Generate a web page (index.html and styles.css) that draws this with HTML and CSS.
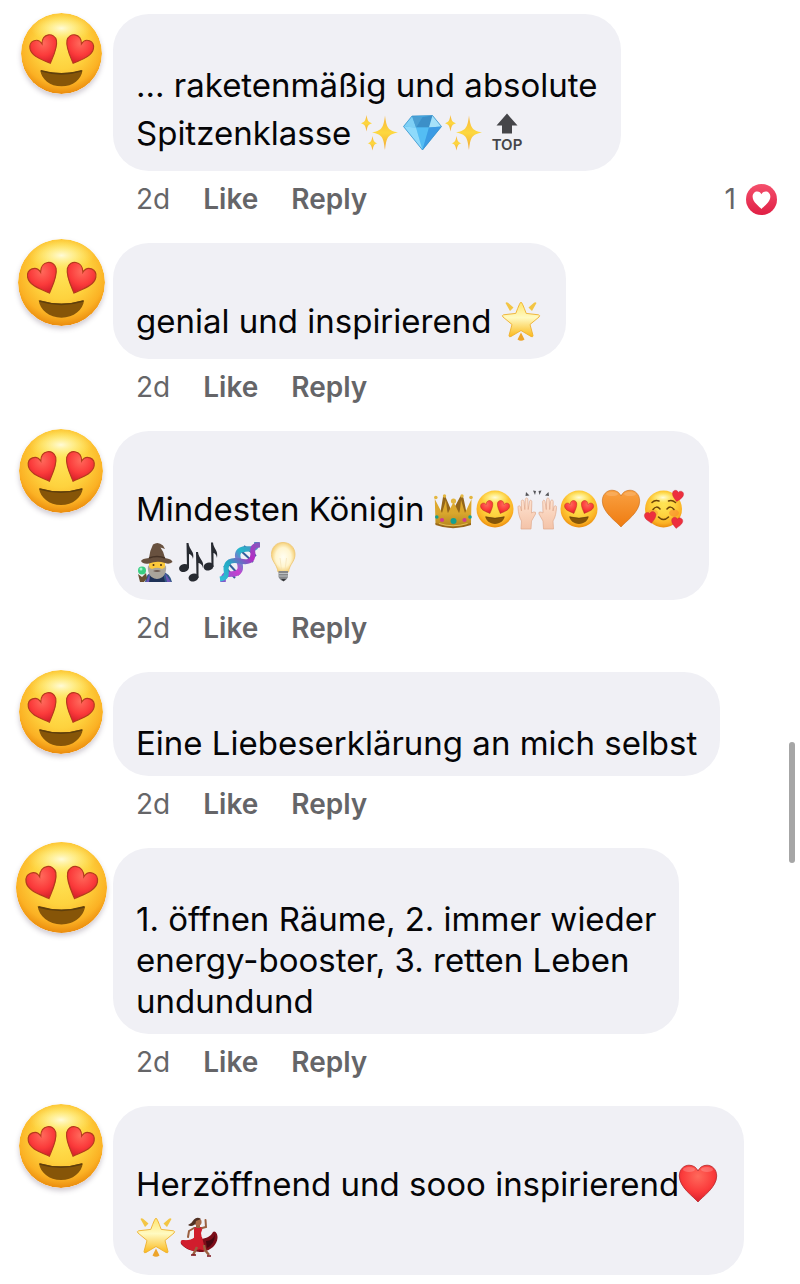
FILE: index.html
```html
<!DOCTYPE html>
<html lang="de">
<head>
<meta charset="utf-8">
<meta name="viewport" content="width=device-width, initial-scale=1">
<title>Kommentare</title>
<link rel="stylesheet" href="styles.css">
</head>
<body>
<svg class="defs" aria-hidden="true">
  <defs>
    <radialGradient id="gFace" cx=".5" cy=".38" r=".62">
      <stop offset="0" stop-color="#ffe556"/><stop offset=".5" stop-color="#fed23e"/><stop offset=".82" stop-color="#fbb124"/><stop offset="1" stop-color="#ea8b0d"/>
    </radialGradient>
    <radialGradient id="gShine"><stop offset="0" stop-color="#fffbd8"/><stop offset=".4" stop-color="#fff4a0" stop-opacity=".75"/><stop offset="1" stop-color="#ffec70" stop-opacity="0"/></radialGradient>
    <radialGradient id="gRed" cx=".5" cy=".3" r=".7"><stop offset="0" stop-color="#ff6a5c"/><stop offset=".6" stop-color="#fb3b3b"/><stop offset="1" stop-color="#d81f2b"/></radialGradient>
    <linearGradient id="gOrange" x2="0" y2="1"><stop offset="0" stop-color="#f9a142"/><stop offset="1" stop-color="#ef7b10"/></linearGradient>
    <linearGradient id="gStar" x2="0" y2="1"><stop offset="0" stop-color="#ffe56b"/><stop offset=".45" stop-color="#fffac2"/><stop offset="1" stop-color="#fbb91b"/></linearGradient>
    <linearGradient id="gSpark" x2="0" y2="1"><stop offset="0" stop-color="#f8b53e"/><stop offset=".5" stop-color="#fdd83f"/><stop offset="1" stop-color="#f2a636"/></linearGradient>
    <linearGradient id="gCrown" x2="0" y2="1"><stop offset="0" stop-color="#e0a92c"/><stop offset=".5" stop-color="#d9a72d"/><stop offset="1" stop-color="#b3821d"/></linearGradient>
    <linearGradient id="gSkin" x2="0" y2="1"><stop offset="0" stop-color="#ffe4d2"/><stop offset="1" stop-color="#f4c3a8"/></linearGradient>
    <radialGradient id="gBulb"><stop offset="0" stop-color="#fffef2"/><stop offset=".65" stop-color="#fff5cf"/><stop offset="1" stop-color="#f6d27c"/></radialGradient>
    <linearGradient id="gReact" x2="0" y2="1"><stop offset="0" stop-color="#f4506c"/><stop offset="1" stop-color="#e01f45"/></linearGradient>
    <linearGradient id="gDnaA" x1="1" y1="0" x2="0" y2="1"><stop offset="0" stop-color="#5d7fc0"/><stop offset=".35" stop-color="#21b9cb"/><stop offset=".65" stop-color="#c93fd0"/><stop offset="1" stop-color="#7c5ccc"/></linearGradient>
    <linearGradient id="gDnaB" x1="1" y1="0" x2="0" y2="1"><stop offset="0" stop-color="#8758bd"/><stop offset=".3" stop-color="#b62bc4"/><stop offset=".65" stop-color="#23a9c4"/><stop offset="1" stop-color="#33bed5"/></linearGradient>

    <path id="eye" d="M15.900 25.500C13 24 7.300 22.600 6.600 18.800C6 15.200 10.200 13.600 12.100 16.600C12.100 11.600 17.800 11.200 18.700 15C19.300 18.300 17.200 22.300 15.900 25.500Z" fill="url(#gRed)" stroke="#b43a1c" stroke-width=".5"/>
    <g id="love">
      <circle cx="21" cy="21" r="18.500" fill="url(#gFace)"/>
      <ellipse cx="21" cy="9.500" rx="14" ry="6.800" fill="url(#gShine)"/>
      <use href="#eye"/><use href="#eye" transform="translate(42.200 0) scale(-1 1)"/>
      <path d="M11.300 28.600Q21 31.400 30.600 28.600C30.200 32.600 26.200 36 21 36S11.800 32.600 11.300 28.600Z" fill="#865508"/>
      <path d="M11.600 28.900Q21 31.700 30.300 28.900" fill="none" stroke="#5f3f0c" stroke-width=".7"/>
    </g>
    <path id="heart" d="M21 39C17 34 2.300 24.500 2.300 13C2.300 6.500 6.800 2.200 12 2.200C16.500 2.200 19.500 4.600 21 8C22.500 4.600 25.500 2.200 30 2.200C35.200 2.200 39.700 6.500 39.700 13C39.700 24.500 25 34 21 39Z"/>
    <g id="redheart">
      <use href="#heart" fill="url(#gRed)" stroke="#b5272a" stroke-width=".8"/>
      <ellipse cx="12" cy="6.500" rx="6" ry="2.500" fill="#fff" opacity=".2"/><ellipse cx="30" cy="6.500" rx="6" ry="2.500" fill="#fff" opacity=".2"/>
    </g>
    <g id="orangeheart">
      <use href="#heart" fill="url(#gOrange)" stroke="#c86b17" stroke-width=".6"/>
      <ellipse cx="12" cy="6" rx="6" ry="2" fill="#fff" opacity=".15"/><ellipse cx="30" cy="6" rx="6" ry="2" fill="#fff" opacity=".15"/>
    </g>
    <g id="adore">
      <circle cx="21.500" cy="21" r="18.500" fill="url(#gFace)"/>
      <ellipse cx="21" cy="9.500" rx="13" ry="6" fill="url(#gShine)"/>
      <ellipse cx="11" cy="25" rx="5" ry="3.500" fill="#f88a2d" opacity=".45"/><ellipse cx="32" cy="25" rx="5" ry="3.500" fill="#f88a2d" opacity=".6"/>
      <g fill="none" stroke="#6d4308" stroke-width="1.500" stroke-linecap="round">
        <path d="M10 14.500Q13 11.500 17 13M26.500 13Q30 11.500 33.500 14.500M11 21.500Q14.500 17 18 21M25 21Q28.500 17 32 21.500M16.500 29Q21.500 34 26.500 29"/>
      </g>
      <use href="#heart" transform="translate(30.500 1) rotate(10) scale(.3)" fill="#ed2f3e" stroke="#b62333"/>
      <use href="#heart" transform="translate(1 24.500) rotate(-10) scale(.31)" fill="#ed2f3e" stroke="#b62333"/>
      <use href="#heart" transform="translate(29.500 28) rotate(8) scale(.3)" fill="#ed2f3e" stroke="#b62333"/>
    </g>
    <g id="star">
      <path d="M22 2Q23 2 27.200 13.400L39.500 14.800Q41.500 15.500 40 17L31 24.500L34 35.500Q34 37.500 32 36.500L22 30.500L12 36.500Q10 37.500 10 35.500L13 24.500L4 17Q2.500 15.500 4.500 14.800L16.800 13.400Q21 2 22 2Z" fill="url(#gStar)" stroke="#eeb02c" stroke-width=".9"/>
      <path d="M6.500 3Q7.500 1.800 9 2.800L14.500 7.500L11 11ZM37.500 3Q36.500 1.800 35 2.800L29.500 7.500L33 11Z" fill="#f3c544"/>
      <path d="M22 32.500L25.500 39.500Q22 42 18.500 39.500Z" fill="#eda42b"/>
    </g>
    <g id="sparkles" fill="url(#gSpark)">
      <path d="M26 3.500C27.500 15.500 29 18.500 39 20.500C29 22.300 27.500 25 26 38C24.500 25 23 22.300 13 20.500C23 18.500 24.500 15.500 26 3.500Z"/>
      <path d="M7.500 3C8.500 8.800 9.500 10.300 13 11.200C9.500 12.200 8.500 13.500 7.500 19.500C6.500 13.500 5.500 12.200 2 11.200C5.500 10.300 6.500 8.800 7.500 3Z"/>
      <path d="M13.500 24C14.500 29.300 15.300 30.500 18.500 31.300C15.300 32.200 14.500 33.500 13.500 38.500C12.500 33.500 11.700 32.200 8.500 31.300C11.700 30.500 12.500 29.300 13.500 24Z"/>
    </g>
    <g id="gem">
      <path d="M11 4L31.500 3.500L40.500 14.500L21.500 38L2.500 14.500Z" fill="#46aee8"/>
      <path d="M11 4L15 15.500L2.500 14.500Z" fill="#7fd0f5"/><path d="M11 4L21.500 5L15 15.500Z" fill="#4c9fd2"/><path d="M31.500 3.500L21.500 5L15 15.500L28 15.500Z" fill="#3c8fc8"/>
      <path d="M31.500 3.500L28 15.500L40.500 14.500Z" fill="#a5e2fa"/><path d="M15 15.500H28L21.500 38Z" fill="#54bdf4"/><path d="M2.500 14.500L15 15.500L21.500 38Z" fill="#8edafb"/><path d="M28 15.500L40.500 14.500L21.500 38Z" fill="#3b9be4"/>
      <path d="M11 4L31.500 3.500L40.500 14.500L21.500 38L2.500 14.500Z" fill="none" stroke="#358fc9" stroke-width=".7"/>
    </g>
    <g id="top" fill="#454549">
      <path d="M22 1.500L32.500 13.500H27V21.500H17V13.500H11.500Z"/>
      <text x="22" y="38" text-anchor="middle" class="top-label">TOP</text>
    </g>
    <g id="crown">
      <path d="M8 27L11 9Q13 6 14 10L20 24L28 9Q30 6 31.500 10L35 27Z" fill="#94661a"/>
      <path d="M2.800 11L10 25L14 12Q15 24 16 25L21.500 14L27 25Q28 24 29 12L33 25L39.500 11L39 36Q21 43 3.500 36Z" fill="url(#gCrown)"/>
      <path d="M3.500 35Q21 42 39 35V37Q21 43.500 3.500 37Z" fill="#98671a"/>
      <g fill="#e3b640"><circle cx="3.800" cy="9.500" r="1.800"/><circle cx="12.500" cy="8" r="1.700"/><circle cx="30" cy="8" r="1.700"/><circle cx="39" cy="9.500" r="1.800"/><circle cx="21.500" cy="13" r="2.600"/></g>
      <circle cx="21.500" cy="33" r="3" fill="#159f90"/><circle cx="10" cy="32" r="2.100" fill="#d13c8c"/><circle cx="32.500" cy="32" r="2.100" fill="#d13c8c"/><circle cx="4.800" cy="29" r="1.800" fill="#159f90"/><circle cx="38" cy="29" r="1.800" fill="#159f90"/>
      <path d="M7 35.500Q21 40 35.500 35.500" fill="none" stroke="#e8c25a" stroke-width=".9"/>
    </g>
    <path id="hand" d="M5 41L5.500 33C3 29 2.500 25 2 19.500C1.800 17.500 4 17 4.500 19L5.500 23L5.300 13.500C5.300 11.500 7.700 11.500 8 13.500L8.800 21.500L9.300 11.500C9.500 9.500 11.700 9.500 11.800 11.500L12.200 21.500L13.500 13.500C13.800 11.500 16 12 15.800 14L15.500 25L17.500 24Q20.500 23.500 19.500 26L15.500 33L15 41Z" fill="url(#gSkin)" stroke="#dfa98c" stroke-width=".7"/>
    <g id="hands">
      <use href="#hand"/><use href="#hand" transform="translate(42.500 0) scale(-1 1)"/>
      <path d="M10 4L13.500 7.500L9.500 8ZM17 2.500L20 3L19 7ZM25.500 2.500L22.500 3L23.500 7ZM32.500 4L29 7.500L33 8Z" fill="#555559"/>
    </g>
    <g id="mage">
      <path d="M11 41Q12 32 20 30H27Q36 32 38 41Z" fill="#315985"/><path d="M15 41L17 32L23 36L29 32L31 41Z" fill="#1e3156"/>
      <path d="M31 32L37 41H33ZM16 32L12 41H15Z" fill="#6b55b5"/>
      <path d="M15 20H31V27Q30 34 23 34T15 27Z" fill="#fbc93c"/>
      <path d="M14 24Q15 27 18 28Q23 25.500 28 28Q31 27 32 24Q33 32 28.500 36Q23 40 17.500 36Q13 32 14 24Z" fill="#aaa59b"/>
      <path d="M19 30Q23 28 27 30Q23 32 19 30Z" fill="#6d5b50"/><circle cx="19.500" cy="24" r="1" fill="#493016"/><circle cx="27" cy="24" r="1" fill="#493016"/>
      <path d="M7 20Q8 17.500 15 17Q16 9 19 3.500Q24 0 29 4.500L31 8L26.500 6.500Q30 11 31 17Q38 18 38.500 21Q35 24 31 22Q23 19.500 15 22.500Q9 23.500 7 20Z" fill="#68513f"/>
      <path d="M15 17Q23 14 31 17" fill="none" stroke="#453225" stroke-width="1.500"/>
      <path d="M4 33L8 36L12 32L13 37L10 41H6Z" fill="#684e31"/><circle cx="8" cy="29.500" r="4" fill="#39cd80"/><circle cx="7" cy="28" r="1.500" fill="#a3f3ca"/>
    </g>
    <g id="notes" fill="#272a31">
      <ellipse cx="8" cy="27" rx="5" ry="4" transform="rotate(-15 8 27)"/><path d="M10.500 2H12.500C13 9 19 10 17 18C16.500 14 13.500 13 13 13V27H11Z"/>
      <ellipse cx="17.500" cy="36.500" rx="5" ry="4" transform="rotate(-15 17.500 36.500)"/><path d="M20 11H22C22.500 18 28.500 19 27 27C26.500 23 23 22 22.500 22V37H20.500Z"/>
      <ellipse cx="32.500" cy="25.500" rx="5" ry="4" transform="rotate(-15 32.500 25.500)"/><path d="M35 1.500H37C37.500 8 42.500 9 41 17C40.500 13 38 12 37.500 12V26H35.500Z"/>
    </g>
    <g id="dna" fill="none">
      <path d="M21 8L35 21M26 5L38 15M6 25L17 37M10 22L21 34" stroke="#345f9c" stroke-width="2"/>
      <path d="M39 1C39 8 35 8 28 8C20 8 18 13 21 20C24 28 22 33 14 33C7 33 5 34 5 41" stroke="url(#gDnaA)" stroke-width="5.500"/>
      <path d="M42 4C35 4 34 7 35 13C35 20 30 22 22 20C13 18 8 21 8 28C9 35 8 37 2 38" stroke="url(#gDnaB)" stroke-width="5"/>
    </g>
    <g id="bulb">
      <path d="M23 1.500C30 1.500 35 6.500 35 13.500C35 20.500 29.500 23 28.500 31H18C17 23 11.500 20.500 11.500 13.500C11.500 6.500 16 1.500 23 1.500Z" fill="url(#gBulb)" stroke="#eec777" stroke-width=".9"/>
      <path d="M20 17L21.500 29M26.500 17L25 29" stroke="#f3dfae" stroke-width=".6"/>
      <path d="M18.500 30H28V36Q26 40 23.300 40T18.500 36Z" fill="#858789"/><path d="M18.500 32.500H28M18.500 35H28" stroke="#cdd0d2" stroke-width=".8"/><path d="M21 38H26L23.500 40.500Z" fill="#35373a"/>
    </g>
    <g id="dancer">
      <path d="M19 22C27 24 34 22 37 16C39 14 42 18 41.500 22C41 29 35 34 27 36C18 36 10 34 5 28Q4 25 7 24Q13 26 19 22Z" fill="#7d0d19"/>
      <path d="M19 21L26 21Q28 28 29 35Q24 32 18 35Q9 33 5 27Q4 24 7 24Q14 25 19 21Z" fill="#d11d2d"/>
      <path d="M30 25Q37 25 39 18Q39 28 31 32Z" fill="#490711"/>
      <path d="M21 31L17 39M28 29L29 34L33 39" stroke="#9b6040" stroke-width="2.500" fill="none"/>
      <path d="M15 39H20M31 40H35" stroke="#7b1119" stroke-width="1.500"/>
      <path d="M18 11L27 11L25 17L26 23H18Z" fill="#d11d2d"/>
      <path d="M18 12L13 15L12 21M26 12L30 11L29.500 4" fill="none" stroke="#9b6040" stroke-width="2" stroke-linecap="round"/>
      <path d="M20 8H24V12H20Z" fill="#9b6040"/><circle cx="22" cy="6" r="3.600" fill="#a76a48"/>
      <path d="M25 3Q21 .5 18 3.500Q16 7 12 9Q15 11 18 9Q20 8 20 5Z" fill="#503022"/>
    </g>
  </defs>
</svg>

<main class="comments">
  <article class="comment">
    <div class="avatar"><svg class="face face-s" viewBox="2.500 2.500 37 37" role="img" aria-label="Avatar"><use href="#love"/></svg></div>
    <div class="body">
      <p class="bubble">... raketenmäßig und absolute<br>Spitzenklasse <svg class="emoji" viewBox="2 -6 42 53"><use href="#sparkles"/></svg><svg class="emoji" viewBox="2 -6 42 53"><use href="#gem"/></svg><svg class="emoji" viewBox="2 -6 42 53"><use href="#sparkles"/></svg><svg class="emoji" viewBox="2 -6 42 53"><use href="#top"/></svg></p>
      <div class="meta"><time>2d</time><button type="button">Like</button><button type="button">Reply</button>
        <span class="reactions">1 <svg class="react" viewBox="0 0 32 32" role="img" aria-label="Love"><circle cx="16" cy="16" r="16" fill="url(#gReact)"/><use href="#heart" transform="translate(5.700 6.700) scale(.49)" fill="#fff"/></svg></span>
      </div>
    </div>
  </article>

  <article class="comment">
    <div class="avatar"><svg class="face face-l" viewBox="2.500 2.500 37 37" role="img" aria-label="Avatar"><use href="#love"/></svg></div>
    <div class="body">
      <p class="bubble">genial und inspirierend <svg class="emoji" viewBox="2 -6 42 53"><use href="#star"/></svg></p>
      <div class="meta"><time>2d</time><button type="button">Like</button><button type="button">Reply</button></div>
    </div>
  </article>

  <article class="comment">
    <div class="avatar"><svg class="face face-m" viewBox="2.500 2.500 37 37" role="img" aria-label="Avatar"><use href="#love"/></svg></div>
    <div class="body">
      <p class="bubble">Mindesten Königin <svg class="emoji" viewBox="2 -6 42 53"><use href="#crown"/></svg><svg class="emoji" viewBox="2 -6 42 53"><use href="#love"/></svg><svg class="emoji" viewBox="2 -6 42 53"><use href="#hands"/></svg><svg class="emoji" viewBox="2 -6 42 53"><use href="#love"/></svg><svg class="emoji" viewBox="2 -6 42 53"><use href="#orangeheart"/></svg><svg class="emoji" viewBox="2 -6 42 53"><use href="#adore"/></svg><br><svg class="emoji" viewBox="2 -6 42 53"><use href="#mage"/></svg><svg class="emoji" viewBox="2 -6 42 53"><use href="#notes"/></svg><svg class="emoji" viewBox="2 -6 42 53"><use href="#dna"/></svg><svg class="emoji" viewBox="2 -6 42 53"><use href="#bulb"/></svg></p>
      <div class="meta"><time>2d</time><button type="button">Like</button><button type="button">Reply</button></div>
    </div>
  </article>

  <article class="comment">
    <div class="avatar"><svg class="face face-m" viewBox="2.500 2.500 37 37" role="img" aria-label="Avatar"><use href="#love"/></svg></div>
    <div class="body">
      <p class="bubble">Eine Liebeserklärung an mich selbst</p>
      <div class="meta"><time>2d</time><button type="button">Like</button><button type="button">Reply</button></div>
    </div>
  </article>

  <article class="comment">
    <div class="avatar"><svg class="face face-xl" viewBox="2.500 2.500 37 37" role="img" aria-label="Avatar"><use href="#love"/></svg></div>
    <div class="body">
      <p class="bubble">1. öffnen Räume, 2. immer wieder<br>energy-booster, 3. retten Leben<br>undundund</p>
      <div class="meta"><time>2d</time><button type="button">Like</button><button type="button">Reply</button></div>
    </div>
  </article>

  <article class="comment">
    <div class="avatar"><svg class="face face-m" viewBox="2.500 2.500 37 37" role="img" aria-label="Avatar"><use href="#love"/></svg></div>
    <div class="body">
      <p class="bubble">Herzöffnend und sooo inspirierend<svg class="emoji" viewBox="2 -6 42 53"><use href="#redheart"/></svg><br><svg class="emoji" viewBox="2 -6 42 53"><use href="#star"/></svg><svg class="emoji" viewBox="2 -6 42 53"><use href="#dancer"/></svg></p>
    </div>
  </article>
</main>
<div class="scroll-thumb"></div>
</body>
</html>
```
FILE: styles.css
```css
* {
  box-sizing: border-box;
}

body {
  margin: 0;
  background: #fff;
  color: #050507;
  font-family: Inter, "Liberation Sans", sans-serif;
  font-size: 33px;
  line-height: 41px;
}

.defs {
  position: absolute;
  width: 0;
  height: 0;
}

.comments {
  padding: 14px 23px 8px 17px;
}

.comment {
  display: flex;
  gap: 8px;
}

.avatar {
  display: flex;
  flex: none;
  align-items: center;
  justify-content: center;
  width: 88px;
  height: 79px;
}

.face {
  flex: none;
  border-radius: 50%;
  box-shadow: 0 3px 5px rgba(70, 50, 80, 0.25);
}

.face-s { width: 81px; height: 81px; }
.face-m { width: 84px; height: 84px; }
.face-l { width: 87px; height: 87px; }
.face-xl { width: 91px; height: 91px; }

.body {
  flex: 1;
  min-width: 0;
}

.bubble {
  width: fit-content;
  margin: 0;
  padding: 51px 23px 12px;
  border-radius: 36px;
  background: #f0f0f5;
}

.emoji {
  width: 42px;
  height: 53px;
  overflow: visible;
  vertical-align: -14px;
}

.top-label {
  font-size: 15px;
  font-weight: 600;
}

.meta {
  display: flex;
  align-items: center;
  gap: 33px;
  height: 56px;
  margin-bottom: 16px;
  padding-left: 23px;
  color: #656568;
  font-size: 28px;
}

.meta button {
  padding: 0;
  border: 0;
  background: none;
  color: inherit;
  font: inherit;
  font-weight: 600;
}

.reactions {
  display: flex;
  align-items: center;
  gap: 10px;
  margin-left: auto;
}

.react {
  width: 31px;
  height: 31px;
}

.scroll-thumb {
  position: fixed;
  top: 742px;
  right: 5px;
  width: 6px;
  height: 121px;
  border-radius: 3px;
  background: #a6a6a6;
}
```
